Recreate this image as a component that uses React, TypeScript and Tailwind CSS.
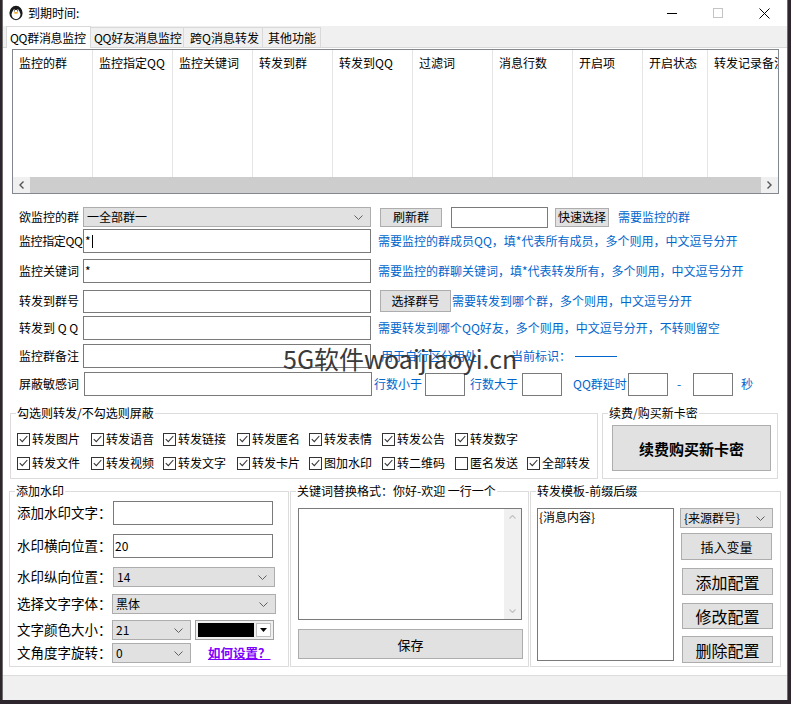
import React from "react";

type P = { className?: string; children?: React.ReactNode };

const Chevron = () => (
  <svg width="9" height="5" viewBox="0 0 9 5" className="shrink-0">
    <path d="M0.5 0.5L4.5 4.5L8.5 0.5" fill="none" stroke="#606060" />
  </svg>
);

const TextBox = ({ className = "", children }: P) => (
  <div className={`flex shrink-0 items-center border border-[#7a7a7a] bg-white pl-[1px] text-[12px] leading-none ${className}`}>
    {children}
  </div>
);

const Dropdown = ({ className = "", children }: P) => (
  <div className={`flex shrink-0 items-center justify-between border border-[#adadad] bg-[#e1e1e1] pl-[3px] pr-[7px] text-[12px] leading-none ${className}`}>
    <span>{children}</span>
    <Chevron />
  </div>
);

const Btn = ({ className = "", children }: P) => (
  <div className={`flex shrink-0 items-center justify-center border border-[#adadad] bg-[#e1e1e1] leading-none ${className}`}>
    {children}
  </div>
);

const Check = ({ label, checked = true, className = "" }: { label: string; checked?: boolean; className?: string }) => (
  <div className={`flex shrink-0 items-center ${className}`}>
    <div className="flex h-[13px] w-[13px] items-center justify-center border border-[#333] bg-white">
      {checked && (
        <svg width="9" height="8" viewBox="0 0 9 8">
          <path d="M0.8 4.2L3.3 6.6L8.3 1" fill="none" stroke="#333" strokeWidth="1.1" />
        </svg>
      )}
    </div>
    <span className="ml-[2px] whitespace-nowrap text-[12px] leading-none">{label}</span>
  </div>
);

const Group = ({ title, className = "", children }: P & { title: string }) => (
  <div className={`relative shrink-0 border border-[#dcdcdc] ${className}`}>
    <span className="absolute left-[5px] top-[-9px] whitespace-nowrap bg-white px-[1px] text-[12px] leading-[16px]">{title}</span>
    {children}
  </div>
);

const Label = ({ className = "", children }: P) => (
  <span className={`ml-[16px] w-[64px] shrink-0 whitespace-nowrap text-[12px] leading-none ${className}`}>{children}</span>
);

const Blue = ({ className = "", children }: P) => (
  <span className={`shrink-0 whitespace-nowrap text-[12px] leading-none text-[#0066cc] ${className}`}>{children}</span>
);

const columns: [string, string][] = [
  ["监控的群", "w-[80px]"],
  ["监控指定QQ", "w-[80px]"],
  ["监控关键词", "w-[80px]"],
  ["转发到群", "w-[80px]"],
  ["转发到QQ", "w-[80px]"],
  ["过滤词", "w-[80px]"],
  ["消息行数", "w-[80px]"],
  ["开启项", "w-[70px]"],
  ["开启状态", "w-[65px]"],
  ["转发记录备注", "w-[90px]"],
];

const row1 = ["转发图片", "转发语音", "转发链接", "转发匿名", "转发表情", "转发公告", "转发数字"];
const row2 = ["转发文件", "转发视频", "转发文字", "转发卡片", "图加水印", "转二维码", "匿名发送", "全部转发"];
const itemW = ["w-[74px]", "w-[72px]", "w-[74px]", "w-[72px]", "w-[73px]", "w-[73px]", "w-[72px]", "w-[66px]"];

const Penguin = () => (
  <svg width="16" height="16" viewBox="0 0 16 16">
    <ellipse cx="8" cy="8" rx="6.6" ry="7.2" fill="#1a1a1a" />
    <ellipse cx="8" cy="9.6" rx="4.4" ry="4.6" fill="#fff" />
    <circle cx="6.2" cy="5.6" r="1.2" fill="#fff" />
    <circle cx="9.8" cy="5.6" r="1.2" fill="#fff" />
    <circle cx="6.4" cy="5.8" r="0.6" fill="#111" />
    <circle cx="9.6" cy="5.8" r="0.6" fill="#111" />
    <ellipse cx="8" cy="7.8" rx="2" ry="0.9" fill="#f2a31b" />
  </svg>
);

export default function App() {
  return (
    <div className="relative h-[704px] w-[791px] overflow-hidden bg-[#2d262c] font-['Noto_Sans_CJK_SC','Liberation_Sans',sans-serif] text-black">
      <div className="ml-[2px] flex h-[700px] w-[786px] flex-col border-x border-[#6e6e6e] bg-white">
        {/* title bar */}
        <div className="flex h-[26px] shrink-0 items-center">
          <div className="ml-[5px]">
            <Penguin />
          </div>
          <span className="ml-[4px] text-[12px] leading-none">到期时间:</span>
          <div className="ml-auto flex h-full">
            <div className="flex w-[46px] items-center justify-center">
              <svg width="10" height="10" viewBox="0 0 10 10">
                <path d="M0 5.5H10" stroke="#000" />
              </svg>
            </div>
            <div className="flex w-[46px] items-center justify-center">
              <svg width="10" height="10" viewBox="0 0 10 10">
                <rect x="0.5" y="0.5" width="9" height="9" fill="none" stroke="#c4c4c4" />
              </svg>
            </div>
            <div className="flex w-[46px] items-center justify-center">
              <svg width="11" height="11" viewBox="0 0 11 11">
                <path d="M0.5 0.5L10.5 10.5M10.5 0.5L0.5 10.5" stroke="#000" />
              </svg>
            </div>
          </div>
        </div>

        {/* tabs */}
        <div className="flex h-[22px] shrink-0 items-end whitespace-nowrap border-b border-[#d9d9d9] bg-[#f0f0f0] pl-[3px] text-[12px] leading-none">
          <div className="relative z-10 -mb-px flex h-[22px] w-[85px] items-center overflow-hidden border border-b-0 border-[#d9d9d9] bg-white pl-[3px] tracking-[-0.3px]">
            QQ群消息监控
          </div>
          <div className="flex h-[20px] w-[93px] items-center overflow-hidden border border-b-0 border-l-0 border-[#d9d9d9] pl-[3px] tracking-[-0.3px]">
            QQ好友消息监控
          </div>
          <div className="flex h-[20px] w-[79px] items-center overflow-hidden border border-b-0 border-l-0 border-[#d9d9d9] pl-[6px]">跨Q消息转发</div>
          <div className="flex h-[20px] w-[58px] items-center overflow-hidden border border-b-0 border-l-0 border-[#d9d9d9] pl-[5px]">其他功能</div>
        </div>

        {/* page */}
        <div className="flex h-[627px] shrink-0 flex-col overflow-hidden bg-white">
          {/* list view */}
          <div className="ml-[9px] mt-[1px] flex h-[145px] w-[767px] shrink-0 flex-col border border-[#828790]">
            <div className="flex h-[127px] overflow-hidden">
              {columns.map(([t, w]) => (
                <div key={t} className={`${w} shrink-0 border-r border-[#e5e5e5]`}>
                  <div className="flex h-[26px] items-center whitespace-nowrap pl-[6px] text-[12px] leading-none">{t}</div>
                </div>
              ))}
            </div>
            <div className="flex h-[16px] bg-[#f0f0f0]">
              <div className="flex w-[17px] items-center justify-center">
                <svg width="5" height="8" viewBox="0 0 5 8">
                  <path d="M4.5 0.5L1 4L4.5 7.5" fill="none" stroke="#555" strokeWidth="1.4" />
                </svg>
              </div>
              <div className="flex-1 bg-[#cdcdcd]" />
              <div className="flex w-[17px] items-center justify-center">
                <svg width="5" height="8" viewBox="0 0 5 8">
                  <path d="M0.5 0.5L4 4L0.5 7.5" fill="none" stroke="#555" strokeWidth="1.4" />
                </svg>
              </div>
            </div>
          </div>

          {/* row 1 */}
          <div className="mt-[13px] flex h-[20px] shrink-0 items-center">
            <Label>欲监控的群</Label>
            <Dropdown className="h-[20px] w-[288px]">一全部群一</Dropdown>
            <Btn className="ml-[9px] h-[19px] w-[62px] text-[12px]">刷新群</Btn>
            <TextBox className="ml-[9px] h-[21px] w-[97px]" />
            <Btn className="ml-[7px] h-[19px] w-[54px] text-[12px]">快速选择</Btn>
            <Blue className="ml-[9px]">需要监控的群</Blue>
          </div>

          {/* row 2 */}
          <div className="mt-[2px] flex h-[24px] shrink-0 items-center">
            <Label className="tracking-[-0.4px]">监控指定QQ</Label>
            <TextBox className="h-[24px] w-[288px]">
              *<span className="ml-[1px] inline-block h-[13px] w-px bg-black" />
            </TextBox>
            <Blue className="ml-[7px]">需要监控的群成员QQ，填*代表所有成员，多个则用，中文逗号分开</Blue>
          </div>

          {/* row 3 */}
          <div className="mt-[6px] flex h-[24px] shrink-0 items-center">
            <Label>监控关键词</Label>
            <TextBox className="h-[24px] w-[288px]">*</TextBox>
            <Blue className="ml-[7px]">需要监控的群聊关键词，填*代表转发所有，多个则用，中文逗号分开</Blue>
          </div>

          {/* row 4 */}
          <div className="mt-[6px] flex h-[24px] shrink-0 items-center">
            <Label>转发到群号</Label>
            <TextBox className="h-[23px] w-[288px]" />
            <Btn className="ml-[9px] h-[22px] w-[71px] text-[12px]">选择群号</Btn>
            <Blue className="ml-[1px]">需要转发到哪个群，多个则用，中文逗号分开</Blue>
          </div>

          {/* row 5 */}
          <div className="mt-[3px] flex h-[24px] shrink-0 items-center">
            <Label>转发到 Q Q</Label>
            <TextBox className="h-[24px] w-[288px]" />
            <Blue className="ml-[7px]">需要转发到哪个QQ好友，多个则用，中文逗号分开，不转则留空</Blue>
          </div>

          {/* row 6 */}
          <div className="mt-[4px] flex h-[24px] shrink-0 items-center">
            <Label>监控群备注</Label>
            <TextBox className="h-[24px] w-[288px]" />
            <Blue className="ml-[10px] w-[130px]">用于自行区分用处</Blue>
            <Blue className="w-[64px]">当前标识：</Blue>
            <div className="h-px w-[42px] bg-[#0066cc]" />
          </div>

          {/* row 7 */}
          <div className="mt-[4px] flex h-[24px] shrink-0 items-center">
            <Label className="w-[65px]">屏蔽敏感词</Label>
            <TextBox className="h-[24px] w-[288px]" />
            <Blue className="ml-[2px] w-[51px]">行数小于</Blue>
            <TextBox className="h-[23px] w-[40px]" />
            <Blue className="ml-[5px] w-[52px]">行数大于</Blue>
            <TextBox className="h-[23px] w-[40px]" />
            <Blue className="ml-[11px] w-[55px]">QQ群延时</Blue>
            <TextBox className="h-[23px] w-[40px]" />
            <Blue className="ml-[9px] w-[16px]">-</Blue>
            <TextBox className="h-[23px] w-[40px]" />
            <Blue className="ml-[8px]">秒</Blue>
          </div>

          {/* check groups */}
          <div className="mt-[17px] flex h-[66px] shrink-0">
            <Group title="勾选则转发/不勾选则屏蔽" className="ml-[7px] h-full w-[588px]">
              <div className="flex flex-col gap-[10px] pl-[6px] pt-[18px]">
                <div className="flex h-[14px] items-center">
                  {row1.map((t, i) => (
                    <Check key={t} label={t} className={itemW[i]} />
                  ))}
                </div>
                <div className="flex h-[14px] items-center">
                  {row2.map((t, i) => (
                    <Check key={t} label={t} checked={t !== "匿名发送"} className={itemW[i]} />
                  ))}
                </div>
              </div>
            </Group>
            <Group title="续费/购买新卡密" className="ml-[4px] h-full w-[176px]">
              <div className="pl-[9px] pt-[11px]">
                <Btn className="h-[46px] w-[159px] text-[15px] font-bold">续费购买新卡密</Btn>
              </div>
            </Group>
          </div>

          {/* bottom groups */}
          <div className="mt-[12px] flex h-[176px] shrink-0">
            <Group title="添加水印" className="ml-[6px] h-full w-[280px]">
              <div className="flex flex-col pl-[7px] pt-[9px] text-[13.5px] leading-none">
                <div className="flex h-[24px] items-center">
                  <span className="w-[96px] shrink-0 whitespace-nowrap">添加水印文字：</span>
                  <TextBox className="h-[24px] w-[160px]" />
                </div>
                <div className="mt-[9px] flex h-[24px] items-center">
                  <span className="w-[96px] shrink-0 whitespace-nowrap">水印横向位置：</span>
                  <TextBox className="h-[24px] w-[160px]">20</TextBox>
                </div>
                <div className="mt-[9px] flex h-[20px] items-center">
                  <span className="w-[96px] shrink-0 whitespace-nowrap">水印纵向位置：</span>
                  <Dropdown className="h-[20px] w-[162px]">14</Dropdown>
                </div>
                <div className="mt-[7px] flex h-[20px] items-center">
                  <span className="w-[95px] shrink-0 whitespace-nowrap">选择文字字体：</span>
                  <Dropdown className="h-[20px] w-[164px]">黑体</Dropdown>
                </div>
                <div className="mt-[6px] flex h-[20px] items-center">
                  <span className="w-[95px] shrink-0 whitespace-nowrap">文字颜色大小：</span>
                  <Dropdown className="h-[20px] w-[79px]">21</Dropdown>
                  <div className="ml-[4px] flex h-[20px] w-[79px] shrink-0 items-center border border-[#a0a0a0] bg-[#f0f0f0] p-[2px]">
                    <div className="h-full flex-1 bg-black" />
                    <div className="ml-[2px] flex h-full w-[15px] items-center justify-center border border-[#c0c0c0] bg-white">
                      <svg width="7" height="4" viewBox="0 0 7 4">
                        <path d="M0 0H7L3.5 4Z" fill="#000" />
                      </svg>
                    </div>
                  </div>
                </div>
                <div className="mt-[3px] flex h-[20px] items-center">
                  <span className="w-[95px] shrink-0 whitespace-nowrap">文角度字旋转：</span>
                  <Dropdown className="h-[20px] w-[79px]">0</Dropdown>
                  <span className="ml-[17px] whitespace-nowrap text-[12.5px] font-bold text-[#8000ff] underline">如何设置？</span>
                </div>
              </div>
            </Group>

            <Group title="关键词替换格式：你好-欢迎 一行一个" className="ml-[1px] h-full w-[239px]">
              <div className="flex flex-col pl-[7px] pt-[16px]">
                <div className="flex h-[112px] w-[224px] border border-[#7a7a7a] bg-white">
                  <div className="flex-1" />
                  <div className="flex w-[17px] flex-col items-center justify-between bg-[#f0f0f0] py-[6px]">
                    <svg width="7" height="4" viewBox="0 0 7 4">
                      <path d="M0.5 3.5L3.5 0.5L6.5 3.5" fill="none" stroke="#c2c2c2" strokeWidth="1.2" />
                    </svg>
                    <svg width="7" height="4" viewBox="0 0 7 4">
                      <path d="M0.5 0.5L3.5 3.5L6.5 0.5" fill="none" stroke="#c2c2c2" strokeWidth="1.2" />
                    </svg>
                  </div>
                </div>
                <Btn className="mt-[9px] h-[30px] w-[225px] text-[13px]">保存</Btn>
              </div>
            </Group>

            <Group title="转发模板-前缀后缀" className="ml-[1px] h-full w-[251px]">
              <div className="flex pl-[6px] pt-[16px]">
                <div className="h-[153px] w-[137px] shrink-0 border border-[#7a7a7a] bg-white pl-[1px] pt-[2px] text-[12px] leading-none">
                  {"{消息内容}"}
                </div>
                <div className="ml-[6px] flex flex-col">
                  <Dropdown className="h-[20px] w-[93px]">{"{来源群号}"}</Dropdown>
                  <Btn className="ml-[1px] mt-[5px] h-[27px] w-[91px] text-[13px]">插入变量</Btn>
                  <Btn className="ml-[2px] mt-[8px] h-[27px] w-[91px] text-[16px]">添加配置</Btn>
                  <Btn className="ml-[2px] mt-[8px] h-[26px] w-[91px] text-[16px]">修改配置</Btn>
                  <Btn className="ml-[2px] mt-[7px] h-[27px] w-[91px] text-[16px]">删除配置</Btn>
                </div>
              </div>
            </Group>
          </div>
        </div>

        {/* status strip */}
        <div className="h-[25px] shrink-0 border-t border-[#dcdcdc] bg-[#f0f0f0]" />
      </div>

      {/* watermark */}
      <span className="pointer-events-none absolute left-[283px] top-[346px] whitespace-nowrap text-[25px] leading-none text-[#3a3a3a]">
        5G软件woaijiaoyi.cn
      </span>
    </div>
  );
}
